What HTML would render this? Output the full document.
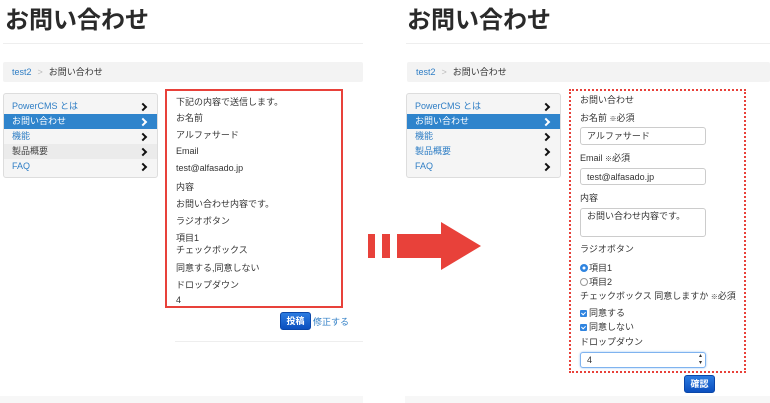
<!DOCTYPE html>
<html><head><meta charset="utf-8">
<style>
*{margin:0;padding:0;box-sizing:border-box}
body{width:770px;height:403px;background:#fff;position:relative;overflow:hidden;font-family:"Liberation Sans","Noto Sans CJK JP",sans-serif;color:#333;font-size:9px}
.a{position:absolute;white-space:nowrap}
h1{position:absolute;font-size:24px;font-weight:bold;color:#2a2a2a;line-height:28px}
.hr{position:absolute;height:1px;background:#eee}
.bc{position:absolute;height:20px;background:#f3f3f3;font-size:9px;line-height:20px;padding-left:9px;border-radius:2px}
.bc b{font-weight:normal;color:#2f7ec5}
.bc i{font-style:normal;color:#bbb;margin:0 6px}
.sb{position:absolute;width:155px;height:85px;background:#f5f5f5;border:1px solid #ddd;border-radius:3px}
.it{position:absolute;left:0;width:153px;height:15px;line-height:15px;padding-left:8px;color:#2f7ec5;font-size:9px}
.it:after{content:"";position:absolute;right:11px;top:5px;width:4px;height:4px;border-right:2px solid #111;border-top:2px solid #111;transform:rotate(45deg)}
.it.on{background:#2f84cc;color:#fff}
.it.on:after{border-color:#fff}
.it.g{background:#ebebeb;color:#444}
.btn{position:absolute;height:18px;width:31px;background:linear-gradient(#2b7be0,#0b4fbf);border:1px solid #0a46a8;border-radius:3px;color:#fff;font-weight:bold;font-size:9px;text-align:center;line-height:16px}
.inp{position:absolute;left:580px;width:126px;border:1px solid #ccc;border-radius:3px;background:#fff;padding-left:6px;font-size:9px;line-height:16px}
.bot{position:absolute;top:396px;height:7px;background:#f7f7f7}
.cb{position:absolute;width:7px;height:7px;border-radius:1px;background:#2f84e0}
.cb:after{content:"";position:absolute;left:2px;top:1px;width:2px;height:3px;border-right:1px solid #fff;border-bottom:1px solid #fff;transform:rotate(45deg)}
</style></head><body>

<!-- LEFT -->
<h1 style="left:5px;top:7px">お問い合わせ</h1>
<div class="hr" style="left:3px;top:43px;width:360px"></div>
<div class="bc" style="left:3px;top:62px;width:360px"><b>test2</b><i>&gt;</i>お問い合わせ</div>
<div class="sb" style="left:3px;top:93px">
 <div class="it" style="top:5px">PowerCMS とは</div>
 <div class="it on" style="top:20px">お問い合わせ</div>
 <div class="it" style="top:35px">機能</div>
 <div class="it g" style="top:50px">製品概要</div>
 <div class="it" style="top:65px">FAQ</div>
</div>
<div class="a" style="left:165px;top:89px;width:178px;height:219px;border:2px solid #e8413a"></div>
<div class="a" style="left:176px;top:95px">下記の内容で送信します。</div>
<div class="a" style="left:176px;top:111px">お名前</div>
<div class="a" style="left:176px;top:128px">アルファサード</div>
<div class="a" style="left:176px;top:146px">Email</div>
<div class="a" style="left:176px;top:163px">test@alfasado.jp</div>
<div class="a" style="left:176px;top:180px">内容</div>
<div class="a" style="left:176px;top:197px">お問い合わせ内容です。</div>
<div class="a" style="left:176px;top:214px">ラジオボタン</div>
<div class="a" style="left:176px;top:231px">項目1</div>
<div class="a" style="left:176px;top:243px">チェックボックス</div>
<div class="a" style="left:176px;top:261px">同意する,同意しない</div>
<div class="a" style="left:176px;top:278px">ドロップダウン</div>
<div class="a" style="left:176px;top:295px">4</div>
<div class="btn" style="left:280px;top:312px">投稿</div>
<div class="a" style="left:313px;top:315px;color:#2f7ec5">修正する</div>
<div class="hr" style="left:175px;top:341px;width:188px"></div>
<div class="bot" style="left:0;width:363px"></div>

<!-- ARROW -->
<svg class="a" style="left:360px;top:215px" width="130" height="65" viewBox="360 215 130 65">
<rect x="368" y="234" width="7" height="24" fill="#e8413a"/>
<rect x="382" y="234" width="8" height="24" fill="#e8413a"/>
<polygon points="397,234 441,234 441,222 481,246 441,270 441,258 397,258" fill="#e8413a"/>
</svg>

<!-- RIGHT -->
<h1 style="left:407px;top:7px">お問い合わせ</h1>
<div class="hr" style="left:406px;top:43px;width:364px"></div>
<div class="bc" style="left:407px;top:62px;width:363px"><b>test2</b><i>&gt;</i>お問い合わせ</div>
<div class="sb" style="left:406px;top:93px">
 <div class="it" style="top:5px">PowerCMS とは</div>
 <div class="it on" style="top:20px">お問い合わせ</div>
 <div class="it" style="top:35px">機能</div>
 <div class="it" style="top:50px">製品概要</div>
 <div class="it" style="top:65px">FAQ</div>
</div>
<div class="a" style="left:569px;top:89px;width:177px;height:284px;border:2px dotted #e8413a"></div>
<div class="a" style="left:580px;top:93px">お問い合わせ</div>
<div class="a" style="left:580px;top:111px">お名前 <span style="font-size:7px">※</span>必須</div>
<div class="inp" style="top:127px;height:18px">アルファサード</div>
<div class="a" style="left:580px;top:151px">Email <span style="font-size:7px">※</span>必須</div>
<div class="inp" style="top:168px;height:17px">test@alfasado.jp</div>
<div class="a" style="left:580px;top:191px">内容</div>
<div class="inp" style="top:208px;height:29px;line-height:14px">お問い合わせ内容です。</div>
<div class="a" style="left:580px;top:242px">ラジオボタン</div>
<div class="a" style="left:580px;top:264px;width:8px;height:8px;border-radius:50%;background:#fff;box-shadow:inset 0 0 0 2.5px #2f84e0"></div>
<div class="a" style="left:589px;top:261px">項目1</div>
<div class="a" style="left:580px;top:278px;width:8px;height:8px;border-radius:50%;border:1px solid #999"></div>
<div class="a" style="left:589px;top:275px">項目2</div>
<div class="a" style="left:580px;top:289px">チェックボックス 同意しますか <span style="font-size:7px">※</span>必須</div>
<div class="cb" style="left:580px;top:310px"></div>
<div class="a" style="left:589px;top:306px">同意する</div>
<div class="cb" style="left:580px;top:324px"></div>
<div class="a" style="left:589px;top:320px">同意しない</div>
<div class="a" style="left:580px;top:335px">ドロップダウン</div>
<div class="inp" style="top:352px;height:16px;border:1px solid #7fb3ef;box-shadow:0 0 2px #9cc4f3;line-height:14px">4<span style="position:absolute;right:3px;top:0;font-size:6px;line-height:7px">▴<br>▾</span></div>
<div class="btn" style="left:684px;top:375px">確認</div>
<div class="bot" style="left:405px;width:365px"></div>
</body></html>
